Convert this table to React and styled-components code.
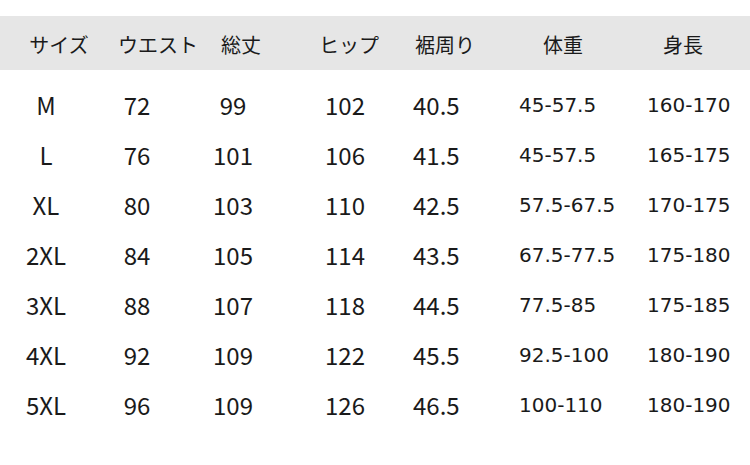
import styled, { createGlobalStyle } from "styled-components"

const GlobalStyle = createGlobalStyle`
  html, body {
    margin: 0;
    padding: 0;
    background: #fff;
  }
  body {
    font-family: "Noto Sans CJK JP", "Noto Sans", sans-serif;
    color: #1a1a1a;
  }
`

const headCols = ["サイズ", "ウエスト", "総丈", "ヒップ", "裾周り", "体重", "身長"]

const rows = [
  ["M", "72", "99", "102", "40.5", "45-57.5", "160-170"],
  ["L", "76", "101", "106", "41.5", "45-57.5", "165-175"],
  ["XL", "80", "103", "110", "42.5", "57.5-67.5", "170-175"],
  ["2XL", "84", "105", "114", "43.5", "67.5-77.5", "175-180"],
  ["3XL", "88", "107", "118", "44.5", "77.5-85", "175-185"],
  ["4XL", "92", "109", "122", "45.5", "92.5-100", "180-190"],
  ["5XL", "96", "109", "126", "46.5", "100-110", "180-190"],
]

// body columns: where each value sits
const bodyCols = [
  { align: "center", pad: 0 },
  { align: "center", pad: 0 },
  { align: "center", pad: 0 },
  { align: "center", pad: 0 },
  { align: "start", pad: 7 },
  { align: "start", pad: 0, alt: true },
  { align: "start", pad: 0, alt: true },
]

export default function App() {
  return (
    <Page>
      <GlobalStyle />
      <HeadRow>
        {headCols.map((h) => (
          <HeadCell key={h}>{h}</HeadCell>
        ))}
      </HeadRow>
      <Body>
        {rows.map((r, i) => (
          <Row key={i}>
            {r.map((v, j) => (
              <Cell key={j} $align={bodyCols[j].align} $pad={bodyCols[j].pad} $alt={bodyCols[j].alt}>
                {v}
              </Cell>
            ))}
          </Row>
        ))}
      </Body>
    </Page>
  )
}

const Page = styled.div`
  width: 750px;
  height: 465px;
  padding-top: 16px;
  box-sizing: border-box;
  overflow: hidden;
`
const HeadRow = styled.div`
  display: grid;
  grid-template-columns: 118px 68px 110px 106px 86px 150px 90px 1fr;
  height: 54px;
  padding-top: 3px;
  box-sizing: border-box;
  align-items: center;
  background: #e6e6e6;
`
const HeadCell = styled.div`
  font-size: 20px;
  line-height: 1;
  text-align: center;
  white-space: nowrap;
  color: #1a1a1a;
`
const Body = styled.div`
  display: flex;
  flex-direction: column;
  padding-top: 10px;
`
const Row = styled.div`
  display: grid;
  grid-template-columns: 92px 90px 102px 122px 113px 128px 1fr;
  height: 50px;
  align-items: center;
`
const Cell = styled.div`
  justify-self: ${(p) => p.$align};
  padding-left: ${(p) => p.$pad}px;
  font-family: ${(p) => (p.$alt ? `"DejaVu Sans", sans-serif` : `"Noto Sans CJK JP", sans-serif`)};
  font-size: ${(p) => (p.$alt ? "20px" : "24px")};
  line-height: 1;
  white-space: nowrap;
  color: #1a1a1a;
`
